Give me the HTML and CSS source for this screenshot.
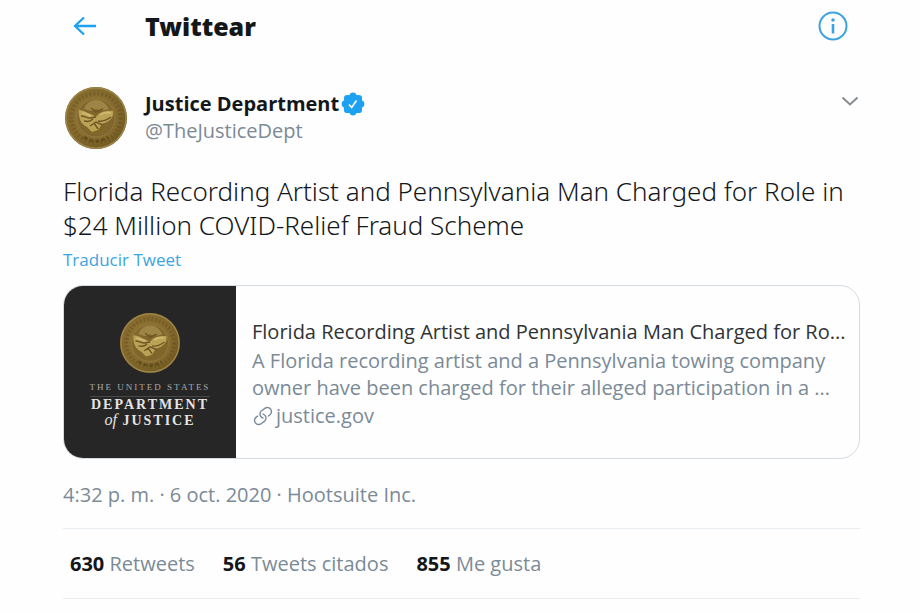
FILE: index.html
```html
<!DOCTYPE html>
<html lang="es">
<head>
<meta charset="utf-8">
<meta name="viewport" content="width=device-width, initial-scale=1">
<title>Twittear</title>
<link rel="stylesheet" href="styles.css">
</head>
<body>
<svg class="defs" aria-hidden="true">
  <defs>
    <radialGradient id="gold" cx="45%" cy="45%" r="58%">
      <stop offset="0" stop-color="#9a7f3c"/>
      <stop offset="0.75" stop-color="#82682c"/>
      <stop offset="1" stop-color="#6b5421"/>
    </radialGradient>
    <symbol id="seal" viewBox="0 0 64 64">
      <circle cx="32" cy="32" r="31" fill="url(#gold)"/>
      <circle cx="32" cy="32" r="30" fill="none" stroke="#9c8448" stroke-width="1.5"/>
      <circle cx="32" cy="32" r="24.500" fill="none" stroke="#5e4819" stroke-width="4" stroke-dasharray="2 2" opacity="0.4"/>
      <circle cx="32" cy="32" r="19" fill="#80662b" stroke="#927941" stroke-width="1"/>
      <path d="M20 23c2-6 7-9 12-9s10 3 13 9l-8 2-5-2-5 2z" fill="#9d8545"/>
      <path d="M15 24c5 0 8 3 12 4l5 3c3-5 10-7 17-6 1 5-2 9-6 11l-5 2-4 6-6 2-5-5c-6-3-9-9-8-17z" fill="#bba356"/>
      <path d="M17 30c4 0 6 2 9 2s5-1 6-1M20 35c4 1 7 0 9-2M34 35c5 1 9-1 13-4M26 40l6-4 7 3M27 22l5 4 7-3M30 37l4 6" fill="none" stroke="#6e5725" stroke-width="1.500"/>
      <path d="M36 29c3-2 7-3 11-2M18 27c3 0 6 2 9 3" fill="none" stroke="#d2bd72" stroke-width="1.500"/>
      <path d="M20 51q12 8 24 0" fill="none" stroke="#49370f" stroke-width="3" stroke-dasharray="4 2" opacity="0.5"/>
    </symbol>
  </defs>
</svg>
<main class="page">
  <header class="topbar">
    <button class="icon-btn back" aria-label="Volver">
      <svg width="24" height="20" viewBox="0 0 24 20"><path d="M11 1.500L2 10l9 8.500M2 10h21" fill="none" stroke="#1da1f2" stroke-width="2.300"/></svg>
    </button>
    <h1 class="title">Twittear</h1>
    <button class="icon-btn" aria-label="Información">
      <svg width="30" height="30" viewBox="0 0 30 30"><circle cx="15" cy="15" r="13.500" fill="none" stroke="#3ba4e0" stroke-width="2"/><circle cx="15" cy="9" r="1.800" fill="#3ba4e0"/><path d="M15 13v9.500" stroke="#3ba4e0" stroke-width="2.600"/></svg>
    </button>
  </header>
  <article class="tweet">
    <div class="author">
      <svg class="avatar" role="img" aria-label="Justice Department"><use href="#seal"/></svg>
      <div class="names">
        <a class="name" href="#">Justice Department
          <svg width="24" height="24" viewBox="0 0 24 24" role="img" aria-label="Cuenta verificada"><g fill="#1da1f2"><circle cx="12" cy="12" r="9.800"/><circle cx="12" cy="4" r="3.400"/><circle cx="17.700" cy="6.300" r="3.400"/><circle cx="20" cy="12" r="3.400"/><circle cx="17.700" cy="17.700" r="3.400"/><circle cx="12" cy="20" r="3.400"/><circle cx="6.300" cy="17.700" r="3.400"/><circle cx="4" cy="12" r="3.400"/><circle cx="6.300" cy="6.300" r="3.400"/></g><path d="M8 12.500l2.700 3L15.500 8.500" fill="none" stroke="#fff" stroke-width="1.600"/></svg>
        </a>
        <span class="handle">@TheJusticeDept</span>
      </div>
      <button class="icon-btn more" aria-label="Más opciones">
        <svg width="18" height="10" viewBox="0 0 18 10"><path d="M1.500 1.500L9 8.500l7.500-7" fill="none" stroke="#858b90" stroke-width="2"/></svg>
      </button>
    </div>
    <p class="text">Florida Recording Artist and Pennsylvania Man Charged for Role in $24 Million COVID-Relief Fraud Scheme</p>
    <a class="translate" href="#">Traducir Tweet</a>
    <a class="card" href="#">
      <div class="thumb">
        <svg class="seal" aria-hidden="true"><use href="#seal"/></svg>
        <span class="thumb-top">THE UNITED STATES</span>
        <span class="thumb-dept">DEPARTMENT</span>
        <span class="thumb-just"><i>of</i> JUSTICE</span>
      </div>
      <div class="card-body">
        <div class="card-title">Florida Recording Artist and Pennsylvania Man Charged for Ro...</div>
        <div class="card-desc">A Florida recording artist and a Pennsylvania towing company owner have been charged for their alleged participation in a ...</div>
        <div class="card-link">
          <svg width="22" height="22" viewBox="0 0 24 24" fill="#7b8a97" aria-hidden="true"><path d="M11.960 14.945c-.067 0-.136-.01-.203-.027-1.130-.318-2.097-.986-2.795-1.932-.832-1.125-1.176-2.508-.968-3.893s.942-2.605 2.068-3.438l3.530-2.608c2.322-1.716 5.610-1.224 7.330 1.100.83 1.127 1.175 2.510.967 3.895s-.943 2.605-2.070 3.438l-1.480 1.094c-.333.246-.804.175-1.050-.158-.246-.334-.176-.804.158-1.050l1.480-1.095c.803-.592 1.327-1.463 1.476-2.450.148-.988-.098-1.975-.690-2.778-1.225-1.656-3.572-2.010-5.230-.784l-3.530 2.608c-.802.593-1.326 1.464-1.475 2.450-.150.990.097 1.975.690 2.778.498.675 1.187 1.150 1.992 1.377.400.114.633.528.520.928-.092.330-.394.547-.722.547z"/><path d="M7.270 22.054c-1.610 0-3.197-.735-4.225-2.125-.832-1.127-1.176-2.510-.968-3.894s.943-2.605 2.070-3.438l1.478-1.094c.334-.245.805-.175 1.050.158s.177.804-.157 1.050l-1.480 1.095c-.803.593-1.326 1.464-1.475 2.450-.148.990.097 1.975.690 2.780 1.225 1.657 3.570 2.010 5.230.785l3.528-2.608c1.658-1.225 2.010-3.570.785-5.230-.498-.674-1.187-1.150-1.992-1.376-.400-.113-.633-.527-.520-.927.112-.400.528-.630.926-.522 1.130.318 2.096.986 2.794 1.932 1.717 2.324 1.224 5.612-1.100 7.330l-3.530 2.608c-.933.693-2.023 1.026-3.105 1.026z"/></svg>
          <span>justice.gov</span>
        </div>
      </div>
    </a>
    <p class="meta">4:32 p. m. · 6 oct. 2020 · Hootsuite Inc.</p>
    <div class="stats">
      <a href="#"><b>630</b> Retweets</a>
      <a href="#"><b>56</b> Tweets citados</a>
      <a href="#"><b>855</b> Me gusta</a>
    </div>
  </article>
</main>
</body>
</html>
```
FILE: styles.css
```css
* { box-sizing: border-box; }
body {
  margin: 0;
  background: #fefefe;
  color: #14171a;
  font-family: "Open Sans", "Noto Sans", sans-serif;
  font-size: 20px;
}
a { color: inherit; text-decoration: none; }
p, h1 { margin: 0; }
svg { display: block; flex: none; }
.defs { position: absolute; width: 0; height: 0; }
.page { padding: 0 60px 0 63px; }
.icon-btn {
  padding: 0;
  border: 0;
  background: none;
  cursor: pointer;
}
.topbar {
  display: flex;
  align-items: center;
  height: 52px;
  padding: 0 12px 0 10px;
}
.title {
  flex: 1;
  margin-left: 48px;
  font-family: "Noto Sans", sans-serif;
  font-size: 25px;
  line-height: 32px;
  font-weight: 900;
}
.author {
  display: flex;
  align-items: flex-start;
  margin-top: 34px;
}
.avatar { width: 64px; height: 64px; margin-left: 1px; }
.names {
  flex: 1;
  margin-left: 17px;
  margin-top: 4px;
}
.name {
  display: flex;
  align-items: center;
  gap: 2px;
  font-weight: 700;
  line-height: 27px;
}
.handle { display: block; line-height: 27px; color: #7b8a97; }
.more { margin: 10px 1px 0 0; }
.text {
  margin-top: 24px;
  font-family: "Noto Sans", sans-serif;
  font-size: 26px;
  line-height: 34px;
  font-weight: 300;
}
.translate {
  display: block;
  margin-top: 6px;
  font-size: 17px;
  line-height: 24px;
  color: #3ba4e0;
}
.card {
  display: flex;
  margin-top: 13px;
  border: 1px solid #d3dce0;
  border-radius: 20px;
  overflow: hidden;
}
.thumb {
  flex: none;
  display: flex;
  flex-direction: column;
  align-items: center;
  width: 172px;
  height: 172px;
  padding-top: 26px;
  background: #262626;
  color: #e4e4e4;
  font-family: "Liberation Serif", serif;
}
.seal { width: 62px; height: 62px; }
.thumb-top {
  margin-top: 6px;
  padding-bottom: 2px;
  border-bottom: 1px solid #484848;
  font-size: 9px;
  line-height: 14px;
  color: #aaa;
  letter-spacing: 2px;
}
.thumb-dept, .thumb-just {
  font-size: 14px;
  line-height: 15px;
  font-weight: 700;
  letter-spacing: 2px;
}
.thumb-just i { font-size: 16px; font-weight: 400; letter-spacing: 0; }
.card-body {
  flex: 1;
  min-width: 0;
  display: flex;
  flex-direction: column;
  justify-content: center;
  padding: 4px 8px 0 16px;
  color: #7b8a97;
  line-height: 27px;
}
.card-title {
  color: #303336;
  line-height: 30px;
  overflow: hidden;
  white-space: nowrap;
}
.card-link { display: flex; align-items: center; gap: 2px; line-height: 30px; }
.meta { margin-top: 22px; line-height: 27px; color: #7b8a97; }
.stats {
  display: flex;
  gap: 28px;
  margin-top: 20px;
  padding: 21px 7px;
  border-top: 1px solid #e6ecf0;
  border-bottom: 1px solid #e6ecf0;
  color: #7b8a97;
  line-height: 27px;
}
.stats b { color: #14171a; }
```
